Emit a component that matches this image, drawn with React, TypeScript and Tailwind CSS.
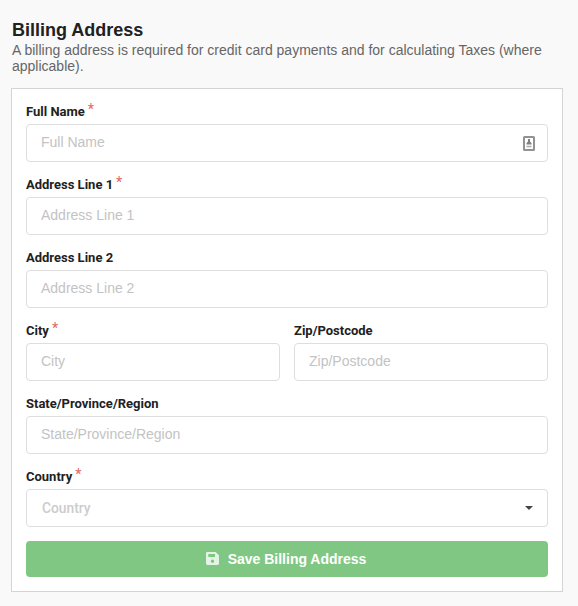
import React from "react";

const sans = "font-['Liberation_Sans',Arial,sans-serif]";

type FieldProps = {
  label: string;
  required?: boolean;
  children?: React.ReactNode;
};

function Label({ label, required }: FieldProps) {
  return (
    <label className="mb-1 block h-[17px] font-[Roboto,sans-serif] text-[13px] leading-[17px] font-bold whitespace-nowrap text-[#212121]">
      {label}
      {required && (
        <span className="relative -top-[2px] ml-[3px] text-[14px] leading-none font-medium text-[#db2828]/70">*</span>
      )}
    </label>
  );
}

function Field({ label, required, children }: FieldProps) {
  return (
    <div className="min-w-0 flex-1">
      <Label label={label} required={required} />
      <div className="flex h-[38px] items-center rounded border border-[#dededf] bg-white pr-3 pl-[14px]">
        <input
          placeholder={label}
          className={`${sans} h-[17px] min-w-0 flex-1 bg-transparent pb-px text-[14px] leading-[17px] outline-none placeholder:text-[#c3c3c3]`}
        />
        {children}
      </div>
    </div>
  );
}

function ContactIcon() {
  return (
    <svg width="12" height="15" viewBox="0 0 12 15" className="shrink-0">
      <rect x="1" y="1" width="10" height="13" rx="0.5" fill="#fff" stroke="#929292" strokeWidth="2" />
      <path d="M5 3H7V5.500L8.500 7V8.500H3.500V7L5 5.500Z" fill="#808080" />
      <path d="M3.500 10.500H8.500" stroke="#aaa" strokeWidth="1.500" />
    </svg>
  );
}

function SaveIcon() {
  return (
    <svg width="13" height="13" viewBox="0 0 13 13" className="relative -top-px shrink-0 opacity-80">
      <path
        fill="#fff"
        fillRule="evenodd"
        d="M1.400 0H9.600L13 3.200V11.600A1.400 1.400 0 0 1 11.600 13H1.400A1.400 1.400 0 0 1 0 11.600V1.400A1.400 1.400 0 0 1 1.400 0ZM2.300 2V5H9V2ZM6.500 7.500A1.700 1.700 0 1 0 6.500 10.900A1.700 1.700 0 1 0 6.500 7.500Z"
      />
    </svg>
  );
}

export default function App() {
  return (
    <main className={`${sans} h-[606px] w-[578px] bg-[#f9f9f9] pt-5 pr-[15px] pl-[11px]`}>
      <header className="h-[68px] pl-px">
        <h1 className="text-[18px] leading-[21px] font-bold text-[#212121]">Billing Address</h1>
        <p className="mt-px text-[14px] leading-4 text-[#666]">
          A billing address is required for credit card payments and for calculating Taxes (where
          applicable).
        </p>
      </header>
      <form className="flex h-[504px] flex-col gap-[14px] border border-[#d4d4d5] bg-white p-[14px]">
        <div className="flex">
          <Field label="Full Name" required>
            <ContactIcon />
          </Field>
        </div>
        <div className="flex">
          <Field label="Address Line 1" required />
        </div>
        <div className="flex">
          <Field label="Address Line 2" />
        </div>
        <div className="flex gap-[14px]">
          <Field label="City" required />
          <Field label="Zip/Postcode" />
        </div>
        <div className="flex">
          <Field label="State/Province/Region" />
        </div>
        <div>
          <Label label="Country" required />
          <div className="flex h-[38px] items-center justify-between rounded border border-[#dededf] bg-white pr-[14px] pl-[15px]">
            <span className="font-[Roboto,sans-serif] text-[13.8px] leading-4 font-medium text-[#cccccc]">Country</span>
            <svg width="8" height="4" viewBox="0 0 8 4">
              <path d="M0 0H8L4 4Z" fill="#444" />
            </svg>
          </div>
        </div>
        <button
          type="button"
          className="flex h-9 items-center justify-center gap-[9px] rounded bg-[#81c784] pr-[2px] text-[14px] leading-[14px] font-bold text-white"
        >
          <SaveIcon />
          Save Billing Address
        </button>
      </form>
    </main>
  );
}
